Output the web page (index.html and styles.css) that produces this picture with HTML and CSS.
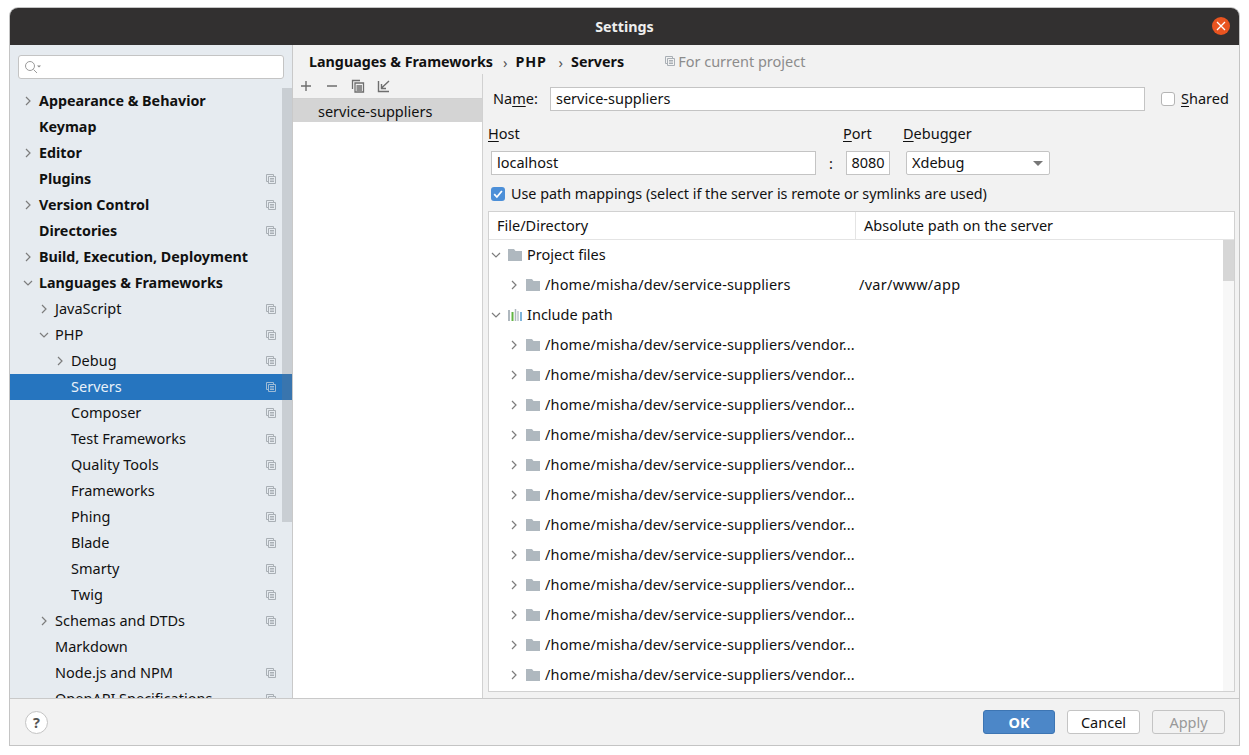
FILE: index.html
```html
<!DOCTYPE html>
<html lang="en">

<head>
  <meta charset="UTF-8">
  <meta name="viewport" content="width=device-width, initial-scale=1.0">
  <title>Settings</title>
  <link rel="stylesheet" href="styles.css">
</head>

<body>
  <svg class="defs" width="0" height="0">
    <symbol id="scope" viewBox="0 0 10 10">
      <path d="M2.5 7.5H.5V.5h7v2M2.5 2.5h7v7h-7zM4 4.5h4M4 6h4M4 7.5h4" fill="none" stroke="currentColor"/>
    </symbol>
    <symbol id="right" viewBox="0 0 10 10">
      <path d="M3 1l4 4-4 4" fill="none" stroke="currentColor" stroke-width="1.2"/>
    </symbol>
    <symbol id="down" viewBox="0 0 10 10">
      <path d="M1 3l4 4 4-4" fill="none" stroke="currentColor" stroke-width="1.2"/>
    </symbol>
    <symbol id="folder" viewBox="0 0 14 12">
      <path d="M0 0h6l1.5 2H14v10H0z" fill="#afb8bf"/>
    </symbol>
  </svg>

  <div class="window">
    <div class="titlebar">
      <span class="title">Settings</span>
      <span class="close">
        <svg width="10" height="10" viewBox="0 0 10 10"><path d="M1 1l8 8M9 1l-8 8" stroke="#fff" stroke-width="1.3"/></svg>
      </span>
    </div>

    <div class="main">
      <div class="sidebar">
        <div class="search">
          <svg width="18" height="14" viewBox="0 0 18 14">
            <circle cx="6" cy="6" r="4.5" fill="none" stroke="#9a9a9a"/>
            <path d="M9.5 9.5L13 13" stroke="#9a9a9a"/>
            <path d="M13 5.5h4l-2 2z" fill="#8a8a8a"/>
          </svg>
        </div>
        <div class="tree">
          <div class="scrollbar"></div>
          <div class="node lv0 strong"><svg class="arrow"><use href="#right"/></svg><span>Appearance &amp; Behavior</span></div>
          <div class="node lv0 strong"><span>Keymap</span></div>
          <div class="node lv0 strong"><svg class="arrow"><use href="#right"/></svg><span>Editor</span></div>
          <div class="node lv0 strong"><span>Plugins</span><svg class="scope"><use href="#scope"/></svg></div>
          <div class="node lv0 strong"><svg class="arrow"><use href="#right"/></svg><span>Version Control</span><svg class="scope"><use href="#scope"/></svg></div>
          <div class="node lv0 strong"><span>Directories</span><svg class="scope"><use href="#scope"/></svg></div>
          <div class="node lv0 strong"><svg class="arrow"><use href="#right"/></svg><span>Build, Execution, Deployment</span></div>
          <div class="node lv0 strong"><svg class="arrow"><use href="#down"/></svg><span>Languages &amp; Frameworks</span></div>
          <div class="node lv1"><svg class="arrow"><use href="#right"/></svg><span>JavaScript</span><svg class="scope"><use href="#scope"/></svg></div>
          <div class="node lv1"><svg class="arrow"><use href="#down"/></svg><span>PHP</span><svg class="scope"><use href="#scope"/></svg></div>
          <div class="node lv2"><svg class="arrow"><use href="#right"/></svg><span>Debug</span><svg class="scope"><use href="#scope"/></svg></div>
          <div class="node lv2 selected"><span>Servers</span><svg class="scope"><use href="#scope"/></svg></div>
          <div class="node lv2"><span>Composer</span><svg class="scope"><use href="#scope"/></svg></div>
          <div class="node lv2"><span>Test Frameworks</span><svg class="scope"><use href="#scope"/></svg></div>
          <div class="node lv2"><span>Quality Tools</span><svg class="scope"><use href="#scope"/></svg></div>
          <div class="node lv2"><span>Frameworks</span><svg class="scope"><use href="#scope"/></svg></div>
          <div class="node lv2"><span>Phing</span><svg class="scope"><use href="#scope"/></svg></div>
          <div class="node lv2"><span>Blade</span><svg class="scope"><use href="#scope"/></svg></div>
          <div class="node lv2"><span>Smarty</span><svg class="scope"><use href="#scope"/></svg></div>
          <div class="node lv2"><span>Twig</span><svg class="scope"><use href="#scope"/></svg></div>
          <div class="node lv1"><svg class="arrow"><use href="#right"/></svg><span>Schemas and DTDs</span><svg class="scope"><use href="#scope"/></svg></div>
          <div class="node lv1"><span>Markdown</span></div>
          <div class="node lv1"><span>Node.js and NPM</span><svg class="scope"><use href="#scope"/></svg></div>
          <div class="node lv1"><span>OpenAPI Specifications</span><svg class="scope"><use href="#scope"/></svg></div>
        </div>
      </div>

      <div class="content">
        <div class="crumbs">
          <b>Languages &amp; Frameworks</b>
          <i class="sep">›</i>
          <b class="php">PHP</b>
          <i class="sep">›</i>
          <b>Servers</b>
          <span class="project"><svg class="scope"><use href="#scope"/></svg>For current project</span>
        </div>

        <div class="panes">
          <div class="servers">
            <div class="toolbar">
              <svg width="14" height="14" viewBox="0 0 14 14"><path d="M2 7h10M7 2v10" stroke="#6e6e6e" stroke-width="1.4"/></svg>
              <svg width="14" height="14" viewBox="0 0 14 14"><path d="M2 7h10" stroke="#6e6e6e" stroke-width="1.4"/></svg>
              <svg width="14" height="14" viewBox="0 0 14 14"><path d="M1.5 10V1.5H9M4 4h8.5v9H4zM5.5 7h5.500M5.500 9h5.500M5.500 11h5.500" fill="none" stroke="#6e6e6e" stroke-width="1.3"/></svg>
              <svg width="14" height="14" viewBox="0 0 14 14"><path d="M1.500 2v10.500H12M4 9.500L12 2M4.500 5v4.500H9" fill="none" stroke="#6e6e6e" stroke-width="1.4"/></svg>
            </div>
            <div class="server-list">
              <div class="server-item">service-suppliers</div>
            </div>
          </div>

          <div class="form">
            <div class="name-row">
              <label class="name-label">Na<u>m</u>e:</label>
              <div class="field name-field">service-suppliers</div>
              <span class="check"></span>
              <label><u>S</u>hared</label>
            </div>

            <div class="labels-row">
              <label class="host-label"><u>H</u>ost</label>
              <label class="port-label"><u>P</u>ort</label>
              <label><u>D</u>ebugger</label>
            </div>

            <div class="host-row">
              <div class="field host-field">localhost</div>
              <span class="colon">:</span>
              <div class="field port-field">8080</div>
              <div class="field combo">Xdebug<i class="caret"></i></div>
            </div>

            <div class="mapping-row">
              <span class="check checked">
                <svg width="14" height="14" viewBox="0 0 14 14"><path d="M3.200 7.200l2.700 2.800 5-6" fill="none" stroke="#fff" stroke-width="1.800"/></svg>
              </span>
              <label>Use path mappings (select if the server is remote or symlinks are used)</label>
            </div>

            <div class="mappings">
              <div class="table-head">
                <div class="col-file">File/Directory</div>
                <div class="col-path">Absolute path on the server</div>
              </div>
              <div class="table-body">
                <div class="table-scroll"><div class="table-thumb"></div></div>
                <div class="row group"><svg class="arrow"><use href="#down"/></svg><svg class="folder"><use href="#folder"/></svg><span>Project files</span></div>
                <div class="row"><svg class="arrow"><use href="#right"/></svg><svg class="folder"><use href="#folder"/></svg><span class="path">/home/misha/dev/service-suppliers</span><span class="remote">/var/www/app</span></div>
                <div class="row group"><svg class="arrow"><use href="#down"/></svg>
                  <svg class="folder" viewBox="0 0 14 12">
                    <path d="M1 1v11" stroke="#afb8bf" stroke-width="2"/>
                    <path d="M4.500 3v9" stroke="#62b543" stroke-width="2"/>
                    <path d="M7.500 0v12" stroke="#afb8bf" stroke-width="1.500"/>
                    <path d="M10 2v10" stroke="#9aa7b0" stroke-width="1"/>
                    <path d="M13 3v9" stroke="#7fb4d9" stroke-width="2"/>
                  </svg><span>Include path</span></div>
                <div class="row"><svg class="arrow"><use href="#right"/></svg><svg class="folder"><use href="#folder"/></svg><span class="path">/home/misha/dev/service-suppliers/vendor...</span></div>
                <div class="row"><svg class="arrow"><use href="#right"/></svg><svg class="folder"><use href="#folder"/></svg><span class="path">/home/misha/dev/service-suppliers/vendor...</span></div>
                <div class="row"><svg class="arrow"><use href="#right"/></svg><svg class="folder"><use href="#folder"/></svg><span class="path">/home/misha/dev/service-suppliers/vendor...</span></div>
                <div class="row"><svg class="arrow"><use href="#right"/></svg><svg class="folder"><use href="#folder"/></svg><span class="path">/home/misha/dev/service-suppliers/vendor...</span></div>
                <div class="row"><svg class="arrow"><use href="#right"/></svg><svg class="folder"><use href="#folder"/></svg><span class="path">/home/misha/dev/service-suppliers/vendor...</span></div>
                <div class="row"><svg class="arrow"><use href="#right"/></svg><svg class="folder"><use href="#folder"/></svg><span class="path">/home/misha/dev/service-suppliers/vendor...</span></div>
                <div class="row"><svg class="arrow"><use href="#right"/></svg><svg class="folder"><use href="#folder"/></svg><span class="path">/home/misha/dev/service-suppliers/vendor...</span></div>
                <div class="row"><svg class="arrow"><use href="#right"/></svg><svg class="folder"><use href="#folder"/></svg><span class="path">/home/misha/dev/service-suppliers/vendor...</span></div>
                <div class="row"><svg class="arrow"><use href="#right"/></svg><svg class="folder"><use href="#folder"/></svg><span class="path">/home/misha/dev/service-suppliers/vendor...</span></div>
                <div class="row"><svg class="arrow"><use href="#right"/></svg><svg class="folder"><use href="#folder"/></svg><span class="path">/home/misha/dev/service-suppliers/vendor...</span></div>
                <div class="row"><svg class="arrow"><use href="#right"/></svg><svg class="folder"><use href="#folder"/></svg><span class="path">/home/misha/dev/service-suppliers/vendor...</span></div>
                <div class="row"><svg class="arrow"><use href="#right"/></svg><svg class="folder"><use href="#folder"/></svg><span class="path">/home/misha/dev/service-suppliers/vendor...</span></div>
              </div>
            </div>
          </div>
        </div>
      </div>
    </div>

    <div class="footer">
      <span class="help">?</span>
      <div class="buttons">
        <button class="btn primary">OK</button>
        <button class="btn">Cancel</button>
        <button class="btn disabled">Apply</button>
      </div>
    </div>
  </div>
</body>

</html>
```

FILE: styles.css
```css
html,
body {
  height: 100%;
}

body {
  margin: 0;
  padding: 8px 10px 10px 10px;
  box-sizing: border-box;
  background-color: #fff;
  color: #111;
  font-family: "Noto Sans", "Open Sans", sans-serif;
  font-size: 14.5px;
  overflow: hidden;
}

b,
.strong,
.title {
  font-size: 14.3px;
}

.defs {
  position: absolute;
}

u {
  text-underline-offset: 2px;
}

.window {
  height: 100%;
  display: flex;
  flex-direction: column;
  background-color: #f2f2f2;
  border-radius: 8px 8px 0 0;
  box-shadow: 0 0 0 1px #c4c4c4;
  overflow: hidden;
}

.titlebar {
  flex: none;
  height: 37px;
  display: flex;
  align-items: center;
  justify-content: center;
  position: relative;
  background-color: #323030;
  color: #eee;
  font-weight: bold;
}

.close {
  position: absolute;
  right: 9px;
  top: 9px;
  width: 18px;
  height: 18px;
  border-radius: 50%;
  background-color: #e95420;
  display: flex;
  align-items: center;
  justify-content: center;
}

.main {
  flex: 1;
  min-height: 0;
  display: flex;
}

/* left settings tree */
.sidebar {
  flex: none;
  width: 282px;
  border-right: 1px solid #c9c9c9;
  background-color: #e6ebf0;
  display: flex;
  flex-direction: column;
  overflow: hidden;
}

.search {
  flex: none;
  height: 22px;
  margin: 10px 8px 9px;
  padding-left: 5px;
  background-color: #fff;
  border: 1px solid #c4c4c4;
  border-radius: 3px;
  display: flex;
  align-items: center;
}

.tree {
  position: relative;
}

/* lies over the rows, the selected row shows through */
.scrollbar {
  position: absolute;
  right: 0;
  top: 0;
  z-index: 1;
  width: 10px;
  height: 434px;
  background-color: rgba(114, 119, 124, .25);
}

.node {
  height: 26px;
  display: flex;
  align-items: center;
  position: relative;
  padding-right: 16px;
}

.node > span {
  padding-bottom: 2px;
}

.node .arrow {
  position: absolute;
  top: 8px;
  width: 10px;
  height: 10px;
  color: #7d7d7d;
}

.lv0 {
  padding-left: 29px;
}

.lv0 .arrow {
  left: 13px;
}

.lv1 {
  padding-left: 45px;
}

.lv1 .arrow {
  left: 29px;
}

.lv2 {
  padding-left: 61px;
}

.lv2 .arrow {
  left: 45px;
}

.strong {
  font-weight: bold;
}

.selected {
  background-color: #2675bf;
  color: #e8f1f9;
}

.scope {
  width: 10px;
  height: 10px;
  color: #a9afb5;
  flex: none;
}

.node .scope {
  margin-left: auto;
}

.selected .scope {
  color: #9dbbd6;
}

/* right part */
.content {
  flex: 1;
  min-width: 0;
  display: flex;
  flex-direction: column;
}

.crumbs {
  flex: none;
  height: 29px;
  padding: 4px 0 0 16px;
  box-sizing: border-box;
  display: flex;
  align-items: center;
}

.sep {
  font-style: normal;
  color: #555;
  margin: 0 8px 0 10px;
}

.php {
  letter-spacing: .8px;
  margin-right: 2px;
}

.project {
  margin-left: 41px;
  padding-bottom: 2px;
  color: #8c8c8c;
  display: flex;
  align-items: center;
  gap: 3px;
}

.panes {
  flex: 1;
  min-height: 0;
  display: flex;
}

.servers {
  flex: none;
  width: 189px;
  border-right: 1px solid #d1d1d1;
  display: flex;
  flex-direction: column;
}

.toolbar {
  flex: none;
  height: 24px;
  display: flex;
  align-items: center;
  gap: 12px;
  padding-left: 6px;
  border-bottom: 1px solid #d1d1d1;
}

.server-list {
  flex: 1;
  background-color: #fff;
}

.server-item {
  height: 23px;
  line-height: 25px;
  padding-left: 25px;
  background-color: #d4d4d4;
}

.form {
  flex: 1;
  min-width: 0;
  padding: 13px 4px 6px 5px;
  display: flex;
  flex-direction: column;
}

.field {
  height: 22px;
  line-height: 20px;
  padding: 0 5px;
  background-color: #fff;
  border: 1px solid #c4c4c4;
  white-space: nowrap;
}

.name-row {
  display: flex;
  align-items: center;
  padding-left: 5px;
}

.name-label {
  width: 57px;
  padding-bottom: 2px;
}

.name-field {
  width: 583px;
  margin-right: 16px;
}

.name-row label:last-child {
  padding-bottom: 2px;
}

.check {
  flex: none;
  width: 12px;
  height: 12px;
  margin-right: 6px;
  background-color: #fff;
  border: 1px solid #b5b5b5;
  border-radius: 3px;
}

.checked {
  width: 14px;
  height: 14px;
  background-color: #4c8fd8;
  border: none;
  display: flex;
}

.labels-row {
  display: flex;
  margin-top: 11px;
  height: 29px;
  line-height: 22px;
}

.host-label {
  width: 355px;
}

.port-label {
  width: 60px;
}

.host-row {
  display: flex;
  align-items: center;
  padding-left: 3px;
}

.host-field {
  width: 313px;
}

.colon {
  width: 30px;
  text-align: center;
}

.port-field {
  width: 42px;
  padding: 0;
  text-align: center;
  margin-right: 16px;
}

.combo {
  width: 132px;
  border-radius: 2px;
  position: relative;
}

.caret {
  position: absolute;
  right: 6px;
  top: 9px;
  border-left: 5px solid transparent;
  border-right: 5px solid transparent;
  border-top: 5px solid #777;
}

.mapping-row {
  display: flex;
  align-items: center;
  margin-top: 10px;
  padding-left: 3px;
  height: 18px;
  font-size: 14.35px;
}

.mapping-row label {
  padding-bottom: 2px;
}

.mappings {
  flex: 1;
  min-height: 0;
  margin-top: 8px;
  background-color: #fff;
  border: 1px solid #d1d1d1;
  display: flex;
  flex-direction: column;
  overflow: hidden;
}

.table-head {
  flex: none;
  height: 27px;
  line-height: 27px;
  display: flex;
  border-bottom: 1px solid #e4e4e4;
}

.col-file {
  width: 367px;
  padding-left: 8px;
  box-sizing: border-box;
  border-right: 1px solid #e4e4e4;
}

.col-path {
  padding-left: 8px;
}

.table-body {
  flex: 1;
  min-height: 0;
  position: relative;
  overflow: hidden;
}

.table-scroll {
  position: absolute;
  right: 0;
  top: -28px;
  bottom: 0;
  width: 11px;
  background-color: #f7f7f7;
}

.table-thumb {
  margin-top: 28px;
  height: 41px;
  background-color: #d6d6d6;
}

.row {
  height: 30px;
  display: flex;
  align-items: center;
  padding-left: 21px;
  position: relative;
  white-space: nowrap;
}

.row span {
  padding-bottom: 2px;
}

.row .arrow {
  position: absolute;
  left: 20px;
  top: 10px;
  width: 10px;
  height: 10px;
  color: #7d7d7d;
}

.row .folder {
  width: 14px;
  height: 12px;
  margin-left: 16px;
  margin-right: 5px;
  flex: none;
}

.group {
  padding-left: 3px;
}

.group .arrow {
  left: 2px;
}

.path {
  width: 314px;
  letter-spacing: .14px;
}

.remote {
  letter-spacing: .3px;
}

/* bottom buttons */
.footer {
  flex: none;
  height: 47px;
  border-top: 1px solid #c9c9c9;
  box-sizing: border-box;
  display: flex;
  align-items: center;
  padding: 0 14px 0 15px;
}

.help {
  width: 21px;
  height: 21px;
  border: 1px solid #c4c4c4;
  border-radius: 50%;
  background-color: #fff;
  color: #555;
  font-weight: bold;
  text-align: center;
  line-height: 21px;
}

.buttons {
  margin-left: auto;
  display: flex;
  gap: 12px;
}

.btn {
  width: 73px;
  height: 24px;
  padding: 0;
  background-color: #fff;
  border: 1px solid #c4c4c4;
  border-radius: 3px;
  color: #111;
  font-family: inherit;
  font-size: 14.5px;
}

.primary {
  width: 72px;
  background-color: #4c87c8;
  border-color: #3d75b3;
  color: #fff;
  font-weight: bold;
}

.disabled {
  background-color: #f2f2f2;
  color: #999;
}
```
